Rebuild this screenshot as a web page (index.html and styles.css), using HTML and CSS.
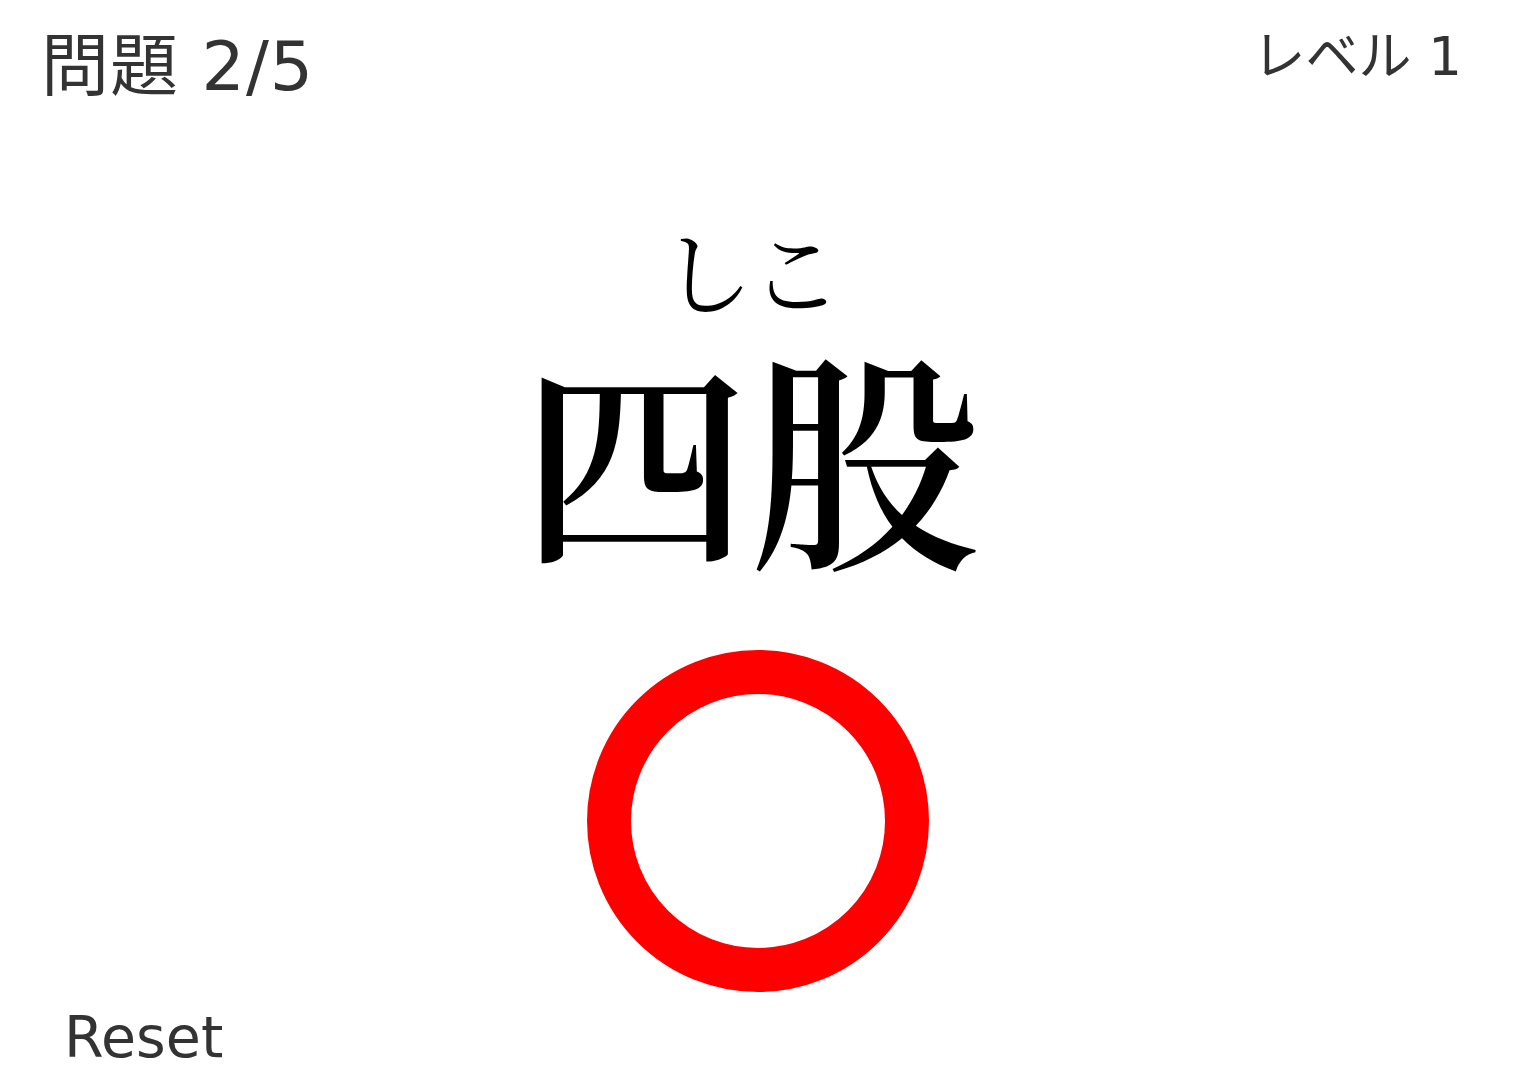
FILE: index.html
```html
<!DOCTYPE html>
<html lang="ja">
<head>
<meta charset="utf-8">
<title>四股</title>
<link rel="stylesheet" href="styles.css">
</head>
<body>
<div class="app">
  <header class="topbar">
    <div class="progress">問題 2/5</div>
    <div class="level">レベル 1</div>
  </header>
  <main class="stage">
    <div class="word">
      <div class="reading">しこ</div>
      <div class="kanji">四股</div>
    </div>
    <div class="mark" role="img" aria-label="正解"></div>
  </main>
  <footer class="bottombar">
    <span class="reset">Reset</span>
  </footer>
</div>
</body>
</html>
```
FILE: styles.css
```css
html, body {
  margin: 0;
  padding: 0;
  background: #ffffff;
}
body {
  font-family: "DejaVu Sans", "Noto Sans CJK JP", sans-serif;
  color: #333333;
}
.app {
  height: 1082px;
  display: flex;
  flex-direction: column;
  overflow: hidden;
}
.topbar {
  display: flex;
  justify-content: space-between;
  align-items: flex-start;
  padding: 30px 73px 0 41px;
}
.progress {
  font-size: 68px;
  line-height: 1.1;
  letter-spacing: 1px;
}
.level {
  font-size: 53px;
  line-height: 1.1;
  margin-top: -2px;
}
.stage {
  flex: 1;
  display: flex;
  flex-direction: column;
  align-items: center;
  padding-right: 35px;
}
.word {
  margin-top: 117px;
  display: flex;
  flex-direction: column;
  align-items: center;
  gap: 23px;
  font-family: "Noto Serif CJK JP", "Liberation Serif", serif;
  color: #000000;
}
.reading {
  font-size: 92px;
  line-height: 1;
  font-weight: 400;
  letter-spacing: -3px;
}
.kanji {
  font-size: 230px;
  line-height: 1;
  font-weight: 600;
}
.mark {
  margin-top: 83px;
  margin-left: 16px;
  width: 342px;
  height: 342px;
  box-sizing: border-box;
  border: 44px solid #ff0000;
  border-radius: 50%;
}
.bottombar {
  padding: 0 0 16px 64px;
}
.reset {
  font-size: 57px;
  line-height: 1;
}
```
